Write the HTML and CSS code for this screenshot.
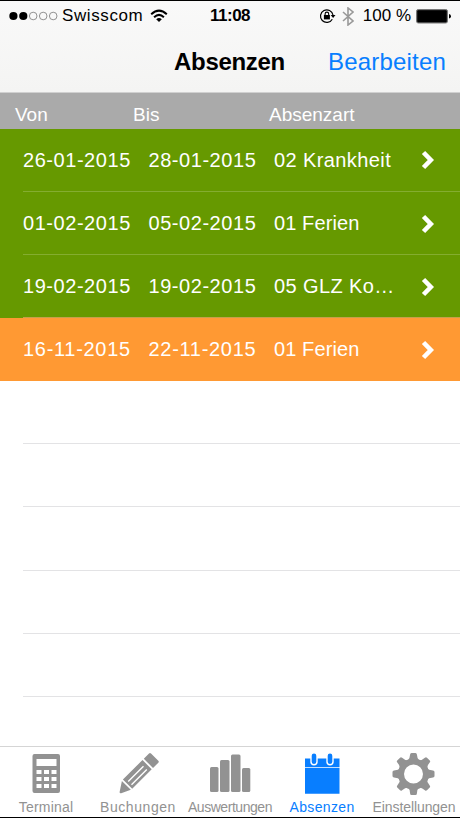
FILE: index.html
```html
<!DOCTYPE html>
<html lang="de">
<head>
<meta charset="utf-8">
<title>Absenzen</title>
<link rel="stylesheet" href="styles.css">
</head>
<body>
<div class="app">
  <header class="top">
    <div class="status">
      <div class="carrier">
        <svg width="49" height="10" viewBox="0 0 49 10"><g fill="#000"><circle cx="4.4" cy="5" r="4.1"/><circle cx="14.3" cy="5" r="4.1"/></g><g fill="none" stroke="#777" stroke-width=".8"><circle cx="24.2" cy="5" r="3.8"/><circle cx="34.2" cy="5" r="3.8"/><circle cx="44.2" cy="5" r="3.8"/></g></svg>
        <span class="name">Swisscom</span>
        <svg class="wifi" width="18" height="14" viewBox="0 0 18 14"><g fill="none" stroke="#000" stroke-width="2"><path d="M1.2 5.2Q9-2 16.8 5.2"/><path d="M4.1 8.2Q9 3.6 13.9 8.2"/></g><path d="M6.2 10.2Q9 7.8 11.8 10.2L9 13z"/></svg>
      </div>
      <div class="time">11:08</div>
      <div class="power">
        <svg width="17" height="16" viewBox="0 0 17 16"><path d="M13.3 11.2A6.3 6.3 0 1 1 14 7" fill="none" stroke="#000" stroke-width="1.2"/><path d="M11.7 7h4.8l-2.4 3z"/><rect x="4.9" y="7" width="6" height="4.4"/><path d="M6.1 7.2V5.900a1.800 1.800 0 0 1 3.600 0v1.300" fill="none" stroke="#000" stroke-width="1.1"/></svg>
        <svg class="bt" width="12" height="19" viewBox="0 0 12 19"><path d="M1 5l10 9-5 4V1l5 4L1 14" fill="none" stroke="#999" stroke-width="1.600"/></svg>
        <span class="percent">100 %</span>
        <svg class="battery" width="36" height="15" viewBox="0 0 36 15"><rect x=".5" y=".5" width="31" height="13.5" rx="1.8" fill="#555" stroke="#777"/><rect x="1.300" y="1.300" width="29.400" height="12" rx="1"/><path d="M33 5q2 .4 2 2.300T33 9.500z"/></svg>
      </div>
    </div>
    <div class="nav">
      <h1>Absenzen</h1>
      <a class="edit">Bearbeiten</a>
    </div>
  </header>
  <div class="columns"><span>Von</span><span>Bis</span><span>Absenzart</span></div>
  <main class="list">
    <div class="row green"><div class="cells"><span>26-01-2015</span><span>28-01-2015</span><span class="kind wide">02 Krankheit</span><svg width="14" height="20" viewBox="0 0 14 20"><path d="M2.500 2.500L9.800 10l-7.300 7.500"/></svg></div></div>
    <div class="row green"><div class="cells"><span>01-02-2015</span><span>05-02-2015</span><span class="kind">01 Ferien</span><svg width="14" height="20" viewBox="0 0 14 20"><path d="M2.500 2.500L9.800 10l-7.300 7.500"/></svg></div></div>
    <div class="row green last"><div class="cells"><span>19-02-2015</span><span>19-02-2015</span><span class="kind wide">05 GLZ Ko…</span><svg width="14" height="20" viewBox="0 0 14 20"><path d="M2.500 2.500L9.800 10l-7.300 7.500"/></svg></div></div>
    <div class="row orange"><div class="cells"><span class="ones">16-11-2015</span><span class="ones">22-11-2015</span><span class="kind">01 Ferien</span><svg width="14" height="20" viewBox="0 0 14 20"><path d="M2.500 2.500L9.800 10l-7.300 7.500"/></svg></div></div>
    <div class="row"><div class="cells"></div></div>
    <div class="row"><div class="cells"></div></div>
    <div class="row"><div class="cells"></div></div>
    <div class="row"><div class="cells"></div></div>
    <div class="row"><div class="cells"></div></div>
  </main>
  <nav class="tabs">
    <div class="tab"><svg width="44" height="44" viewBox="0 0 44 44"><path fill-rule="evenodd" d="M10.500 2h23.500a2 2 0 0 1 2 2v35a2 2 0 0 1-2 2h-23.500a2 2 0 0 1-2-2V4a2 2 0 0 1 2-2zM12.500 7v7h20V7zM12.500 18v4h5v-4zM20 18v4h5v-4zM27.500 18v4h5v-4zM12.500 25v4h5v-4zM20 25v4h5v-4zM27.500 25v4h5v-4zM12.500 32v4h5v-4zM20 32v4h5v-4zM27.500 32v4h5v-4z"/></svg><span class="terminal">Terminal</span></div>
    <div class="tab"><svg width="44" height="44" viewBox="0 0 44 44"><path d="M35 1.500l7.300 7.300q1 1 0 2L37 16 27.800 6.700 33 1.500q1-1 2 0zM26.500 8l9.200 9.300-19.500 19.500L6.900 27.500zM5.900 29l8.900 8.800-9.600 3.400q-2 .4-1.500-1.700z"/><path d="M12.200 29.500L27.500 14.200M15.500 32.800L30.800 17.500" stroke="#fff" stroke-width="1.400"/></svg><span class="buchungen">Buchungen</span></div>
    <div class="tab"><svg width="44" height="44" viewBox="0 0 44 44"><rect x="2" y="15" width="8.500" height="25" rx="1.500"/><rect x="12" y="8" width="9.500" height="32" rx="1.500"/><rect x="23" y="2.500" width="9.500" height="37.500" rx="1.500"/><rect x="34" y="16" width="8.300" height="24" rx="1.500"/></svg><span class="auswertungen">Auswertungen</span></div>
    <div class="tab active"><svg width="44" height="44" viewBox="0 0 44 44"><path d="M5 6.500h34.500V15H5zM5 15.800h34.500v26H5z"/><g stroke="#fff" stroke-width="1.400"><rect x="11" y=".7" width="6" height="12" rx="3"/><rect x="27" y=".7" width="6" height="12" rx="3"/></g></svg><span class="absenzen">Absenzen</span></div>
    <div class="tab"><svg width="44" height="44" viewBox="0 0 44 44"><g transform="translate(21.500 22)"><path fill-rule="evenodd" d="M-15.500 0A15.500 15.500 0 1 0 15.500 0 15.500 15.500 0 1 0-15.500 0ZM-9.500 0A9.500 9.500 0 1 1 9.500 0 9.500 9.500 0 1 1-9.500 0Z"/><g id="teeth"><path id="tooth" d="M-6-13Q-3.600-15-3.400-19.500-3.300-21-2-21H2Q3.300-21 3.400-19.500 3.600-15 6-13z"/><use href="#tooth" transform="rotate(45)"/><use href="#tooth" transform="rotate(90)"/><use href="#tooth" transform="rotate(135)"/></g><use href="#teeth" transform="rotate(180)"/></g></svg><span class="einstellungen">Einstellungen</span></div>
  </nav>
</div>
</body>
</html>
```
FILE: styles.css
```css
* { box-sizing: border-box; }
body { margin: 0; font-family: "Liberation Sans", Arial, sans-serif; background: #fff; color: #000; }
svg { display: block; flex: none; }
.app { width: 460px; height: 818px; display: flex; flex-direction: column; border-top: 1px solid #000; border-bottom: 1px solid #000; overflow: hidden; }
.top { height: 92px; flex: none; background: linear-gradient(#f9f9f9, #f4f4f3); border-bottom: 1px solid #d0d0d0; }
.status { height: 30px; display: grid; grid-template-columns: 1fr 40px 1fr; align-items: center; font-size: 17px; line-height: 20px; }
.carrier { display: flex; align-items: center; padding-left: 9px; }
.name { margin-left: 4px; letter-spacing: .6px; }
.wifi { margin-left: 7px; }
.time { font-weight: bold; font-size: 17px; letter-spacing: -.5px; white-space: nowrap; }
.power { display: flex; align-items: center; justify-content: flex-end; padding-right: 8px; }
.bt { margin-left: 7px; margin-right: 1px; }
.power > svg:first-child { margin-right: -1px; }
.percent { margin-left: 8px; white-space: nowrap; }
.battery { margin-left: 5px; }
.nav { height: 61px; display: grid; grid-template-columns: 174px 154px 1fr; align-items: center; }
h1 { grid-column: 2; margin: 0; font-size: 24px; line-height: 28px; letter-spacing: -.3px; }
.edit { font-size: 24px; line-height: 28px; letter-spacing: .2px; color: #087eff; }
.columns { height: 35.6px; flex: none; display: grid; grid-template-columns: 118px 136px 1fr; padding: 10px 0 0 15px; background: #aaa; color: #fff; font-size: 19px; line-height: 24px; }
.list { flex: 1; min-height: 0; display: flex; flex-direction: column; }
.row { height: 63.15px; flex: none; padding-left: 23px; color: #fff; }
.cells { height: 100%; padding-top: 1.4px; border-bottom: 1px solid #e3e3e5; display: grid; grid-template-columns: 125.5px 125.5px 147px 1fr; align-items: center; font-size: 20px; letter-spacing: .55px; white-space: nowrap; }
.cells path { fill: none; stroke: #fff; stroke-width: 4.6; }
.cells .ones { letter-spacing: .7px; }
.cells .kind { letter-spacing: .1px; }
.cells .wide { letter-spacing: .4px; }
.green { background: #690; }
.green .cells { border-color: #84ad30; }
.green.last .cells { border-color: #c4a04a; }
.orange { background: #f93; }
.orange .cells { border-color: #f93; }
.tabs { height: 71px; flex: none; display: grid; grid-template-columns: repeat(5, 92px); background: #fff; border-top: 1px solid #d5d5d5; }
.tab { display: flex; flex-direction: column; align-items: center; padding-top: 5px; color: #929292; font-size: 14px; line-height: 18px; white-space: nowrap; }
.tab svg { fill: #929292; }
.tab span { margin-top: 2px; }
.active { color: #087eff; }
.active svg { fill: #087eff; }
.terminal { letter-spacing: .2px; }
.buchungen { letter-spacing: .55px; }
.auswertungen { letter-spacing: -.45px; }
.absenzen { letter-spacing: .35px; }
.einstellungen { letter-spacing: -.1px; }
```
